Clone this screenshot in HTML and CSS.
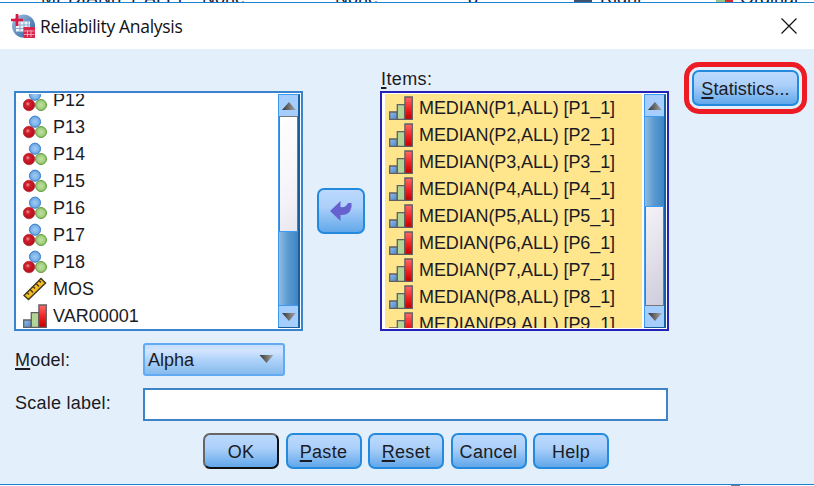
FILE: index.html
```html
<!DOCTYPE html>
<html lang="en">
<head>
<meta charset="utf-8">
<title>Reliability Analysis</title>
<link rel="stylesheet" href="styles.css">
</head>
<body>
<svg width="0" height="0" class="defs">
  <defs>
    <radialGradient id="gb"><stop offset="0" stop-color="#9fcbf5"/><stop offset=".65" stop-color="#7fb4ea"/><stop offset="1" stop-color="#5a98da"/></radialGradient>
    <radialGradient id="gr" cx=".4" cy=".4"><stop offset="0" stop-color="#f09a9a"/><stop offset=".4" stop-color="#d01f2b"/><stop offset="1" stop-color="#b8121f"/></radialGradient>
    <radialGradient id="gg"><stop offset="0" stop-color="#bfe0a0"/><stop offset=".65" stop-color="#a5d082"/><stop offset="1" stop-color="#82b860"/></radialGradient>
    <linearGradient id="lr" x2="0" y2="1"><stop offset="0" stop-color="#ff6a6a"/><stop offset=".55" stop-color="#ee2020"/><stop offset="1" stop-color="#c00000"/></linearGradient>
    <linearGradient id="lb" x2="1" y2="1"><stop offset="0" stop-color="#8fbcf0"/><stop offset="1" stop-color="#4f86c4"/></linearGradient>
    <linearGradient id="tri" x2="1"><stop offset="0" stop-color="#333"/><stop offset="1" stop-color="#aaa"/></linearGradient>
    <symbol id="nominal" viewBox="0 0 24 24"><circle cx="12" cy="6.700" r="5.600" fill="url(#gb)" stroke="#4384cc"/><circle cx="6" cy="17" r="5.800" fill="url(#gr)" stroke="#b01824" stroke-width=".6"/><circle cx="18" cy="17" r="5.500" fill="url(#gg)" stroke="#66a042"/></symbol>
    <symbol id="ordinal" viewBox="0 0 24 24"><g stroke="#625f62" stroke-width="1.3"><path d="M.7 16h7.6v7.3H.7z" fill="url(#lb)"/><path d="M8.3 8.6h7.4v14.7H8.3z" fill="#b2d596"/><path d="M15.9 1h7.4v22.3h-7.4z" fill="url(#lr)"/></g></symbol>
    <symbol id="scale" viewBox="0 0 24 24"><path d="M1 18.500 18 1.500l4.500 4.500L5.500 22.500z" fill="#f8bd22" stroke="#403a20" stroke-width="1.500"/><path d="m4 15.500 2 2m1-5 3 3m0-6 2 2m1-5 3 3m0-6 2 2" stroke="#403a20" stroke-width="1.300"/></symbol>
  </defs>
</svg>
<div class="behind top"><span class="c1">MEDIAN(P7,ALL)</span><span class="c2">None</span><span class="c3">None</span><span class="c4">8</span><i class="dash"></i><span class="c5">Right</span><i class="mark"></i><span class="c6">Ordinal</span></div>
<div class="dialog">
  <header class="titlebar">
    <svg class="logo" width="24" height="24" viewBox="0 0 24 24"><defs><linearGradient id="lg" x2="1" y2="1"><stop offset="0" stop-color="#a9c5e4"/><stop offset="1" stop-color="#245c9e"/></linearGradient></defs><circle cx="12.5" cy="12" r="11.5" fill="url(#lg)"/><path d="M5 7.500h14v10H5z" fill="#edf4fc"/><path d="M5 11h14M5 14.500h14M9 8v9M13 8v9M17 8v9" stroke="#85a9d0"/><path d="M12.500 13h11.500v11h-11.500z" fill="#d8274c"/><path d="M13 17h10.500M13 20.500h10.500M16.500 16v7M20 16v7" stroke="#f6b9c6" stroke-width=".8"/><path d="M6 0v12M0 6h12" stroke="#dc1742" stroke-width="2.700"/></svg>
    <h1>Reliability Analysis</h1>
    <svg class="close" width="16" height="16" viewBox="0 0 16 16"><path d="M.5.5l15 15M15.500.5l-15 15" stroke="#111" stroke-width="1.200"/></svg>
  </header>
  <main>
    <section class="pickers">
      <div class="listbox source">
        <ul>
          <li><svg><use href="#nominal"/></svg>P12</li>
          <li><svg><use href="#nominal"/></svg>P13</li>
          <li><svg><use href="#nominal"/></svg>P14</li>
          <li><svg><use href="#nominal"/></svg>P15</li>
          <li><svg><use href="#nominal"/></svg>P16</li>
          <li><svg><use href="#nominal"/></svg>P17</li>
          <li><svg><use href="#nominal"/></svg>P18</li>
          <li><svg><use href="#scale"/></svg>MOS</li>
          <li><svg><use href="#ordinal"/></svg>VAR00001</li>
        </ul>
        <div class="scroll"><b><svg viewBox="0 0 14 8"><path d="M0 8 7 0l7 8z" fill="url(#tri)"/></svg></b><div class="track"><div class="thumb"></div></div><b><svg viewBox="0 0 14 8"><path d="M0 0h14L7 8z" fill="url(#tri)"/></svg></b></div>
      </div>
      <button class="btn move"><svg width="22" height="20" viewBox="0 0 22 20"><path d="M0 10 10.500 0v6Q16 7 18 2h3.500v4q-2 9-11 8v6z" fill="#6661cf"/></svg></button>
      <div class="target">
        <label><u>I</u>tems:</label>
        <div class="listbox chosen">
          <ul>
            <li><svg><use href="#ordinal"/></svg>MEDIAN(P1,ALL) [P1_1]</li>
            <li><svg><use href="#ordinal"/></svg>MEDIAN(P2,ALL) [P2_1]</li>
            <li><svg><use href="#ordinal"/></svg>MEDIAN(P3,ALL) [P3_1]</li>
            <li><svg><use href="#ordinal"/></svg>MEDIAN(P4,ALL) [P4_1]</li>
            <li><svg><use href="#ordinal"/></svg>MEDIAN(P5,ALL) [P5_1]</li>
            <li><svg><use href="#ordinal"/></svg>MEDIAN(P6,ALL) [P6_1]</li>
            <li><svg><use href="#ordinal"/></svg>MEDIAN(P7,ALL) [P7_1]</li>
            <li><svg><use href="#ordinal"/></svg>MEDIAN(P8,ALL) [P8_1]</li>
            <li><svg><use href="#ordinal"/></svg>MEDIAN(P9,ALL) [P9_1]</li>
          </ul>
          <div class="scroll"><b><svg viewBox="0 0 14 8"><path d="M0 8 7 0l7 8z" fill="url(#tri)"/></svg></b><div class="track"><div class="thumb"></div></div><b><svg viewBox="0 0 14 8"><path d="M0 0h14L7 8z" fill="url(#tri)"/></svg></b></div>
        </div>
      </div>
      <div class="ring"><button class="btn"><u>S</u>tatistics...</button></div>
    </section>
    <div class="field model"><label><u>M</u>odel:</label><div class="combo">Alpha<svg width="15" height="8" viewBox="0 0 14 8"><path d="M0 0h14L7 8z" fill="url(#tri)"/></svg></div></div>
    <div class="field"><label>Scale label:</label><input type="text"></div>
    <footer>
      <button class="btn ok">OK</button>
      <button class="btn"><u>P</u>aste</button>
      <button class="btn"><u>R</u>eset</button>
      <button class="btn">Cancel</button>
      <button class="btn">Help</button>
    </footer>
  </main>
</div>
<div class="behind bottom"><i></i></div>
</body>
</html>
```
FILE: styles.css
```css
* { box-sizing: border-box; }
body {
  margin: 0;
  width: 814px;
  height: 486px;
  overflow: hidden;
  background: #fff;
  color: #1b1b24;
  font: 18px/27px "Liberation Sans", Arial, sans-serif;
}
.defs { position: absolute; }
u { text-decoration: underline; text-decoration-thickness: 1.5px; text-underline-offset: 2px; text-decoration-skip-ink: none; }

.behind { display: flex; overflow: hidden; background: #fff; }
.behind.top { height: 2px; align-items: flex-end; padding-left: 41px; line-height: 12px; color: #1b2033; }
.behind.top span { flex: none; margin-bottom: -2px; }
.c1 { width: 161px; }
.c2 { width: 133px; }
.c3 { width: 133px; }
.c4 { width: 106px; }
.dash { width: 18px; height: 2px; background: #41516b; }
.c5 { width: 116px; margin-left: 8px; }
.mark { width: 17px; height: 2px; background: linear-gradient(90deg, #9cc48b 50%, #d42b2b 50%); }
.c6 { margin-left: 7px; }
.behind.bottom { height: 1px; padding-left: 731px; }
.behind.bottom i { width: 9px; background: #8a6f92; }

.dialog { height: 483px; border: solid #1a83cf; border-width: 1px 0; background: #e3effb; }
.titlebar { height: 46px; display: flex; align-items: center; padding: 0 17px 0 11px; background: #fff; }
.logo { margin-top: -1px; }
h1 { margin: 0 auto 0 5px; font: 17.5px/24px "Open Sans", "Noto Sans", sans-serif; letter-spacing: -.3px; color: #111; }
.close { margin-top: 0; }

main { padding: 13px 7px 0 14px; height: 435px; }
.pickers { display: flex; align-items: flex-start; height: 269px; }
.listbox {
  width: 289px;
  height: 240px;
  display: flex;
  padding: 1px;
  border: 2px solid #3a84cf;
  background: #fff;
}
.source { margin-top: 29px; }
.chosen { border-color: #2523b5; padding-left: 3px; }
ul { flex: 1; margin: 0 2px 0 0; padding: 0; list-style: none; overflow: hidden; height: 234px; }
.source ul { padding-left: 6px; }
.source li:first-child { margin-top: -8px; }
.chosen ul { background: #ffe58c; padding: 0 0 0 4px; letter-spacing: -.1px; }
li { height: 27px; padding-top: 1px; display: flex; align-items: center; white-space: nowrap; line-height: 28px; }
.source li { padding-top: 0; }
li svg { width: 24px; height: 24px; margin-right: 6px; flex: none; }

.scroll { width: 22px; display: flex; flex-direction: column; border: 1px solid #3c9af0; border-right: 2px solid #17609f; border-bottom-color: #17609f; }
.scroll b { height: 21px; display: flex; align-items: center; justify-content: center; background: #a5ceff; }
.scroll b svg { width: 14px; height: 8px; }
.track { flex: 1; display: flex; flex-direction: column; border: solid #777; border-width: 1px; background: linear-gradient(135deg, #fff, #f4f2f7 45%, #cfccdc); }
.source .track { border-bottom: 0; justify-content: flex-end; }
.chosen .track { border-top: 0; }
.thumb { margin: 0 -1px; background: linear-gradient(90deg, #8fbbe0, #5d9bd0 45%, #3d85c4); border: solid #3c9af0; border-width: 1px 0; }
.source .thumb { height: 75px; }
.chosen .thumb { height: 91px; }

.btn {
  height: 36px;
  width: 76px;
  padding: 2px 0 0;
  border: 2px solid #248ade;
  border-radius: 7px;
  background: linear-gradient(#bcd9fd, #acd0fa 40%, #62a8ea);
  color: inherit;
  font: inherit;
  letter-spacing: .3px;
  text-align: center;
}
.move { width: 48px; height: 46px; margin: 126px 15px 0 14px; padding: 0; display: grid; place-items: center; }
.target label { display: block; height: 29px; padding-left: 1px; line-height: 35px; letter-spacing: .4px; }
.ring { margin-left: 15px; width: 123px; height: 52px; padding: 3px; border: 5px solid #ed1c24; border-radius: 15px; }
.ring .btn { display: block; width: 107px; letter-spacing: .1px; }

.field { display: flex; align-items: center; height: 33px; margin-top: 12px; letter-spacing: .2px; }
.field label { width: 129px; padding: 2px 0 0 1px; }
.field:not(.model) label { margin-top: -4px; letter-spacing: .25px; }
.combo {
  width: 142px;
  height: 33px;
  padding: 2px 9px 0 3px;
  display: flex;
  align-items: center;
  justify-content: space-between;
  border: 2px solid #62aaf2;
  border-radius: 3px;
  background: linear-gradient(#c5deff, #d2e5ff 20%, #b0d3fa 50%, #86bbed);
  letter-spacing: 0;
}
.combo svg { margin-top: -4px; }
input { width: 525px; height: 33px; border: 2px solid #3d83c6; background: #fff; }
footer { display: flex; gap: 6.500px; margin: 12px 0 0 189px; }
.ok { border-color: #666 #111 #111 #666; }
```
